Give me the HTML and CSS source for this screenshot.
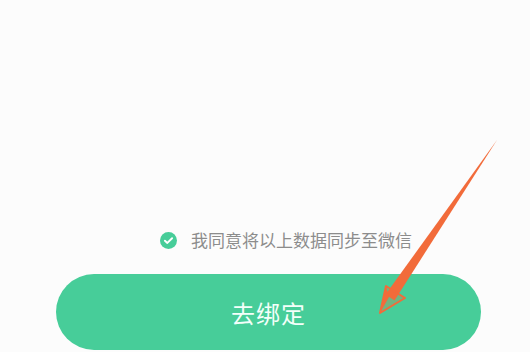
FILE: index.html
```html
<!DOCTYPE html>
<html lang="zh-CN">
<head>
  <meta charset="UTF-8" />
  <meta name="viewport" content="width=device-width, initial-scale=1" />
  <title>去绑定</title>
  <link rel="stylesheet" href="styles.css">
</head>
<body>
  <main class="page">
    <div class="agree">
      <span class="check">
        <svg viewBox="0 0 18 18" width="17" height="17">
          <circle cx="9" cy="9" r="9" fill="#47cd99"/>
          <path d="M5.2 9.2 L7.8 11.6 L12.8 6.6" fill="none" stroke="#fff" stroke-width="2" stroke-linecap="round" stroke-linejoin="round"/>
        </svg>
      </span>
      <span class="agree-text">我同意将以上数据同步至微信</span>
    </div>
    <button class="bind-btn">去绑定</button>
  </main>

  <!-- annotation arrow drawn over the screen -->
  <svg class="arrow" viewBox="0 0 530 352" width="530" height="352">
    <polygon points="497,140 385.5,294.5 394.5,300.5" fill="#f26b3a"/>
    <polygon points="386,286 380,313 405,298" fill="rgba(242,107,58,0.25)" stroke="#f26b3a" stroke-width="2" stroke-linejoin="round"/>
    <polygon points="386,286 380,313 389,297" fill="#f26b3a"/>
  </svg>
</body>
</html>
```

FILE: styles.css
```css
:root {
  --green: #47cd99;
  --bg: #fcfcfc;
  --muted: #8c8c8c;
}

* {
  margin: 0;
  padding: 0;
  box-sizing: border-box;
}

html, body {
  height: 100%;
}

body {
  background: var(--bg);
  font-family: "Noto Sans CJK SC", "Noto Sans", sans-serif;
  position: relative;
  overflow: hidden;
}

.page {
  height: 100%;
  display: flex;
  flex-direction: column;
  justify-content: flex-end;
  padding: 0 49px 2px 56px;
}

.agree {
  display: flex;
  align-items: center;
  gap: 14px;
  padding-left: 104px;
  margin-bottom: 22px;
}

.check {
  display: flex;
}

.agree-text {
  font-size: 17px;
  line-height: 24px;
  color: var(--muted);
}

.bind-btn {
  height: 76px;
  border: none;
  border-radius: 38px;
  background: var(--green);
  color: #f4fffa;
  font-family: inherit;
  font-size: 24px;
  letter-spacing: 1px;
  cursor: pointer;
}

.arrow {
  position: absolute;
  left: 0;
  top: 0;
  pointer-events: none;
}
```
